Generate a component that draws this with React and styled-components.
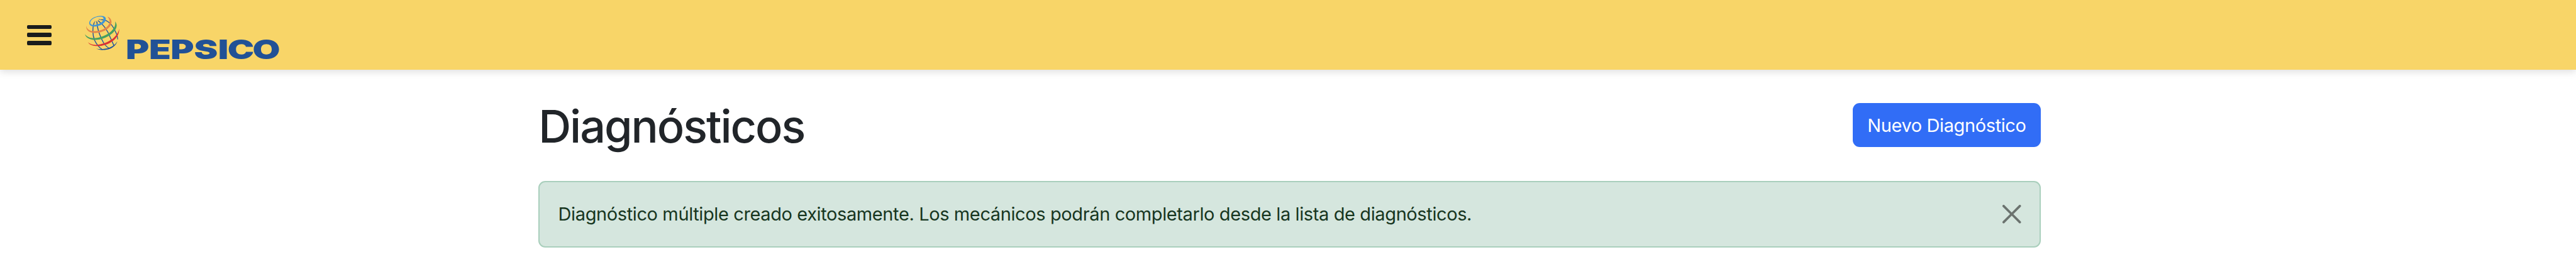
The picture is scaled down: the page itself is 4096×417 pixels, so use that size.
import React from "react";
import styled, { createGlobalStyle } from "styled-components";

const GlobalStyle = createGlobalStyle`
  *, *::before, *::after { box-sizing: border-box; }
  body {
    margin: 0;
    background: #fff;
    color: #212529;
    font-family: Inter, "Liberation Sans", sans-serif;
    overflow: hidden;
  }
`;

const Page = styled.div`
  min-height: 417px;
`;

const TopBar = styled.header`
  display: flex;
  align-items: flex-start;
  height: 110.6px;
  padding: 24.6px 0 0 43.3px;
  background: #f8d568;
  box-shadow: 0 3.7px 11px rgba(0, 0, 0, 0.13);
`;

const MenuButton = styled.button`
  display: flex;
  flex-direction: column;
  justify-content: space-between;
  width: 38.7px;
  height: 32px;
  margin: 15px 53px 0 0;
  padding: 0;
  border: 0;
  background: none;
`;

const MenuBar = styled.span`
  height: 6.5px;
  border-radius: 1.9px;
  background: #1a1c1c;
`;

const Brand = styled.a`
  display: flex;
  align-items: flex-start;
`;

const Globe = styled.svg`
  display: block;
  width: 55.3px;
  height: 55.3px;
`;

const Wordmark = styled.svg`
  display: block;
  width: 248.8px;
  height: 52.2px;
  margin: 28.6px 0 0 10px;
  overflow: visible;
  font-family: Inter, sans-serif;
  font-weight: 900;
  fill: #215196;
`;

const Container = styled.main`
  width: 2389px;
  margin: 53.5px 0 0 856.2px;
`;

const TitleRow = styled.div`
  display: flex;
  justify-content: space-between;
  align-items: flex-start;
  height: 123.5px;
`;

const Title = styled.h1`
  margin: -7.6px 0 0;
  font-size: 72px;
  font-weight: 500;
  line-height: 88px;
  letter-spacing: -2.05px;
  white-space: nowrap;
`;

const PrimaryButton = styled.button`
  width: 299.5px;
  height: 70px;
  padding: 1.6px 0 0;
  border: 0;
  border-radius: 11px;
  background: #316df6;
  color: #fff;
  font: 400 29px/44px Inter, sans-serif;
  letter-spacing: -0.4px;
  white-space: nowrap;
`;

const Alert = styled.div`
  display: flex;
  align-items: center;
  justify-content: space-between;
  height: 106.9px;
  padding: 0 29.7px 0 29.4px;
  border: 2px solid #a9cfbc;
  border-radius: 11px;
  background: #d5e6de;
  color: #17361f;
`;

const AlertText = styled.span`
  font-size: 29px;
  line-height: 44px;
  letter-spacing: -0.39px;
  white-space: nowrap;
`;

const CloseButton = styled.button`
  display: flex;
  padding: 0;
  border: 0;
  background: none;
`;

const Glyph = styled.svg`
  display: block;
  width: 29.5px;
  height: 29.5px;
`;

const GlobeMark = () => (
  <Globe viewBox="439.5 79 180 180" fill="none">
    <g stroke="#1f519b" strokeWidth="4.5" strokeLinecap="round">
      <path d="M487 116C478 142 478 178 490 207C500 228 512 243 529 254" />
      <path d="M502 112C503 145 518 190 536 219C545 233 554 242 566 248" />
      <path d="M509 106C536 126 558 158 571 192C578 207 583 220 590 234" />
      <path d="M526 100C556 99 582 125 597 160C604 174 609 186 609 200" strokeWidth="4" />
      <path d="M492 108L487 118M500 108L502 118M508 104L520 116M512 98L530 101" strokeWidth="2.4" />
    </g>
    <path fill="#1f519b" d="M498 250C515 258 545 260 570 250C590 242 604 226 607 212C600 225 585 238 565 245C545 252 520 254 498 250Z" />
    <path fill="#3f96d6" fillRule="evenodd" d="M462 120C460 98 492 80 524 80C543 80 551 90 547 103C541 122 512 136 486 135C472 134 463 129 462 120ZM467 116C467 124 476 128 490 127C511 125 534 112 536 98C537 88 530 84 519 84C493 84 467 100 467 116Z" />
    <path fill="#e4854a" d="M447 130C442 161 475 172 508 167C550 160 580 135 577 108C575 95 567 87 556 84C566 94 570 106 566 118C559 138 535 153 505 158C475 162 449 155 447 130Z" />
    <path fill="#46a060" d="M440 175C445 200 480 208 512 203C560 195 605 160 604 128C603 120 600 113 596 109C600 130 590 145 575 160C550 182 515 194 485 195C465 195 448 187 440 175Z" />
    <path fill="#dc3232" d="M455 216C465 235 495 239 525 235C575 227 619 192 617 147C612 173 590 196 565 210C535 226 500 234 480 229C468 226 460 221 455 216Z" />
  </Globe>
);

export default function App() {
  return (
    <Page>
      <GlobalStyle />
      <TopBar>
        <MenuButton aria-label="Menú">
          <MenuBar />
          <MenuBar />
          <MenuBar />
        </MenuButton>
        <Brand>
          <GlobeMark />
          <Wordmark viewBox="0 0 810 170">
            <text transform="scale(1.333 1)" x="0" y="134.7" dx="0 -1 -1.4 -0.5 1.2 -3.8 -7" fontSize="139">
              PEPSICO
            </text>
          </Wordmark>
        </Brand>
      </TopBar>
      <Container>
        <TitleRow>
          <Title>Diagnósticos</Title>
          <PrimaryButton>Nuevo Diagnóstico</PrimaryButton>
        </TitleRow>
        <Alert role="alert">
          <AlertText>
            Diagnóstico múltiple creado exitosamente. Los mecánicos podrán completarlo desde la lista de diagnósticos.
          </AlertText>
          <CloseButton aria-label="Cerrar">
            <Glyph viewBox="0 0 16 16" fill="#6b736f">
              <path d="M.293.293a1 1 0 0 1 1.414 0L8 6.586 14.293.293a1 1 0 1 1 1.414 1.414L9.414 8l6.293 6.293a1 1 0 0 1-1.414 1.414L8 9.414l-6.293 6.293a1 1 0 0 1-1.414-1.414L6.586 8 .293 1.707a1 1 0 0 1 0-1.414z" />
            </Glyph>
          </CloseButton>
        </Alert>
      </Container>
    </Page>
  );
}
